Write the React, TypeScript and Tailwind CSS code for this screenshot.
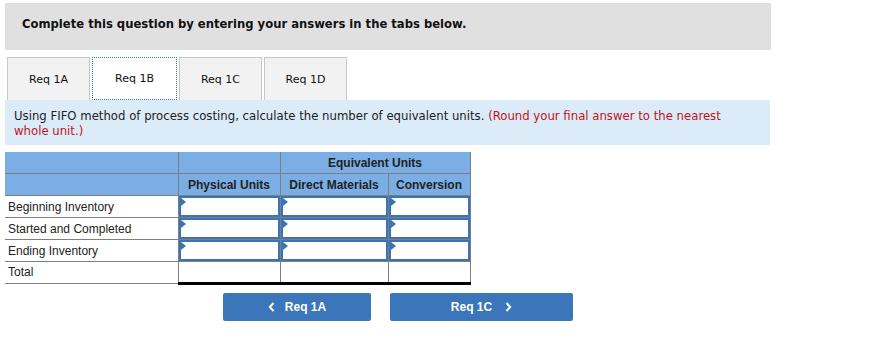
import React from "react";

const rows = ["Beginning Inventory", "Started and Completed", "Ending Inventory"];

function InputCell() {
  return (
    <td className="border border-[#7f7f7f] p-0 h-[22px] bg-white align-top">
      <div className="relative h-[21px] border-2 border-[#3c73b5] bg-white">
        <div className="absolute left-0 top-0 w-0 h-0 border-t-[4px] border-b-[4px] border-l-[5px] border-t-transparent border-b-transparent border-l-[#3c73b5]" />
      </div>
    </td>
  );
}

export default function App() {
  const tabs = ["Req 1A", "Req 1B", "Req 1C", "Req 1D"];
  return (
    <div className="w-[889px] h-[345px] bg-white pt-[3px] pl-[5px]" style={{ fontFamily: "'DejaVu Sans', Verdana, sans-serif" }}>
      <div className="w-[766px] h-[47px] bg-[#e0e0e0] flex items-center pl-[17px] pb-[4px]">
        <span className="text-[11.6px] font-bold text-[#111]">Complete this question by entering your answers in the tabs below.</span>
      </div>
      <div className="flex mt-[7px] pl-[2px] h-[43px] gap-[2px]">
        {tabs.map((t, i) => (
          <div
            key={t}
            className={
              i === 1
                ? "w-[85px] h-[43px] bg-white border border-dotted border-[#3c73b5] flex items-center justify-center pt-[2px] text-[11px] text-[#111]"
                : "w-[83px] h-[43px] bg-[#f2f2f2] border border-b-0 border-[#c8c8c8] flex items-center justify-center pt-[2px] text-[11px] text-[#111]"
            }
          >
            {t}
          </div>
        ))}
      </div>
      <div className="w-[765px] h-[45px] bg-[#dbebf8] pl-[9px] pr-[38px] pt-[8px] text-[13px] leading-[15px] text-[#222]" style={{ fontFamily: "'DejaVu Sans Condensed', 'DejaVu Sans', sans-serif" }}>
        <p>
          Using FIFO method of process costing, calculate the number of equivalent units.{" "}
          <span className="text-[#c0141c]">(Round your final answer to the nearest whole unit.)</span>
        </p>
      </div>
      <table className="mt-[7px] border-collapse text-[12px] text-[#222]" style={{ fontFamily: "'Liberation Sans', Arial, sans-serif" }}>
        <colgroup>
          <col className="w-[173px]" />
          <col className="w-[102px]" />
          <col className="w-[108px]" />
          <col className="w-[82px]" />
        </colgroup>
        <thead>
          <tr className="bg-[#7aaee5] h-[21px]">
            <th className="border-r border-b border-[#7f7f7f] p-0" />
            <th className="border border-t-0 border-[#7f7f7f] p-0" />
            <th colSpan={2} className="border border-t-0 border-[#7f7f7f] font-bold text-center p-0 pt-[1px]">Equivalent Units</th>
          </tr>
          <tr className="bg-[#7aaee5] h-[22px]">
            <th className="border-r border-b border-[#7f7f7f] p-0" />
            <th className="border border-[#7f7f7f] font-bold p-0 pt-[2px]">Physical Units</th>
            <th className="border border-[#7f7f7f] font-bold p-0 pt-[2px]">Direct Materials</th>
            <th className="border border-[#7f7f7f] font-bold p-0 pt-[2px]">Conversion</th>
          </tr>
        </thead>
        <tbody>
          {rows.map((r) => (
            <tr key={r} className="h-[22px]">
              <td className="border-b border-r border-[#7f7f7f] pl-[3px] p-0 pt-[2px]">{r}</td>
              <InputCell />
              <InputCell />
              <InputCell />
            </tr>
          ))}
          <tr className="h-[22px]">
            <td className="border-b border-r border-[#7f7f7f] pl-[3px] p-0">Total</td>
            <td className="border-x border-[#7f7f7f] border-t border-t-black border-b-[3px] border-b-black p-0" />
            <td className="border-x border-[#7f7f7f] border-t border-t-black border-b-[3px] border-b-black p-0" />
            <td className="border-x border-[#7f7f7f] border-t border-t-black border-b-[3px] border-b-black p-0" />
          </tr>
        </tbody>
      </table>
      <div className="flex mt-[8px] pl-[218px] gap-[19px]" style={{ fontFamily: "'Liberation Sans', Arial, sans-serif" }}>
        <div className="w-[148px] h-[28px] bg-[#3b76bb] rounded-[2px] flex items-center justify-center text-white font-bold text-[12px] gap-[10px]">
          <svg width="7" height="10" viewBox="0 0 7 10"><path d="M5.5 1 L1.8 5 L5.5 9" stroke="white" strokeWidth="2" fill="none" /></svg>
          <span>Req 1A</span>
        </div>
        <div className="w-[183px] h-[28px] bg-[#3b76bb] rounded-[2px] flex items-center justify-center text-white font-bold text-[12px] gap-[13px]">
          <span>Req 1C</span>
          <svg width="7" height="10" viewBox="0 0 7 10"><path d="M1.5 1 L5.2 5 L1.5 9" stroke="white" strokeWidth="2" fill="none" /></svg>
        </div>
      </div>
    </div>
  );
}
